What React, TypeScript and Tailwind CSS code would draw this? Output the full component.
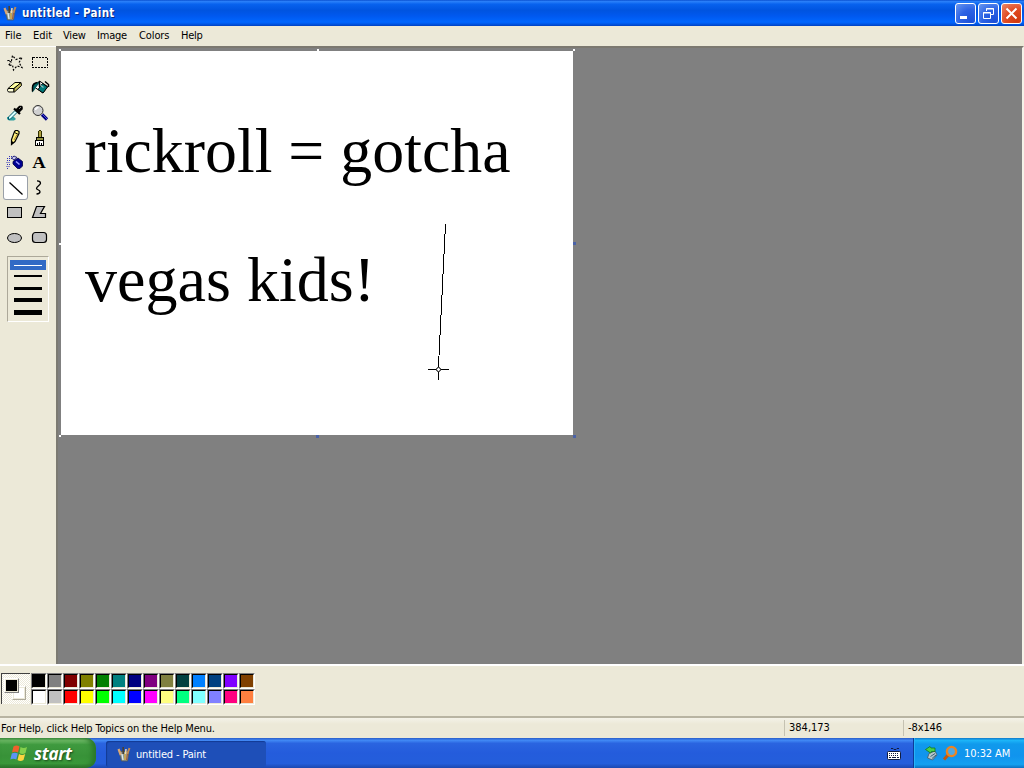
import type { ReactNode } from 'react'

const ui = "font-['DejaVu_Sans_Condensed','DejaVu_Sans',sans-serif]"

// top row / bottom row of the colour box
const PALETTE = [
  ['#000000', '#808080', '#800000', '#808000', '#008000', '#008080', '#000080', '#800080', '#808040', '#004040', '#0080ff', '#004080', '#8000ff', '#804000'],
  ['#ffffff', '#c0c0c0', '#ff0000', '#ffff00', '#00ff00', '#00ffff', '#0000ff', '#ff00ff', '#ffff80', '#00ff80', '#80ffff', '#8080ff', '#ff0080', '#ff8040'],
]

const TOOLS: { name: string; art: ReactNode }[] = [
  {
    name: 'Free-Form Select',
    art: (
      <path
        d="M4.500 10.500h4l1-5 3.500 4 6-2-3 5 3 5-5-1.500-3.500 4-1-5-4 .500 2.500-3.500z"
        fill="none"
        stroke="#000"
        strokeWidth="1.200"
        strokeDasharray="2 1.500"
      />
    ),
  },
  {
    name: 'Select',
    art: <rect x="4.500" y="7.500" width="15" height="10" fill="none" stroke="#000" strokeDasharray="2 1" shapeRendering="crispEdges" />,
  },
  {
    name: 'Eraser',
    art: (
      <g stroke="#000" strokeLinejoin="round">
        <path d="M12 7.500h6l-7 6H5z" fill="#ffffa0" />
        <path d="M5 13.500h6v3.500H5.500l-1-1.500z" fill="#ffffd8" />
        <path d="M18 7.500l.5 3-7 6.500H11v-3.500z" fill="#c8c060" />
      </g>
    ),
  },
  {
    name: 'Fill With Color',
    art: (
      <g>
        <path d="M11.500 6l8 5.500-4.500 6.500-8-5.500z" fill="#fff" stroke="#000" />
        <path d="M14.500 8.500l5 3.500-4.500 6-5-3.500z" fill="#007878" stroke="#000" />
        <path d="M10.500 9l5 3.500" stroke="#90c0c0" strokeWidth="1.500" />
        <path d="M4 17.500v-5l2-4 3-1.500 2.500.500-2 3-2 2.500-1 2z" fill="#006060" />
        <path d="M4.500 16.500v-4c0-3 1.500-4.500 5-5M11.500 12V6" fill="none" stroke="#000" strokeWidth="1.500" />
        <path d="M17 6.500l3.500 3v2.500" fill="none" stroke="#000" strokeWidth="1.500" />
      </g>
    ),
  },
  {
    name: 'Pick Color',
    art: (
      <g>
        <path d="M4 17h7l2 2-2 1.500H6L4 19z" fill="#30a0a0" />
        <path d="M5.500 19.500v-2.500l6.500-6.500 2 2-6.500 6.500z" fill="#d8ffff" stroke="#005868" />
        <path d="M11 8.500l6 5.500" stroke="#000" strokeWidth="2.200" />
        <path d="M13 10l3.500-3.500h2l.5.500v2l-3.500 3.500z" fill="#000" stroke="#000" strokeWidth="1.500" />
        <path d="M16 9l2-2" stroke="#888" />
      </g>
    ),
  },
  {
    name: 'Magnifier',
    art: (
      <g>
        <path d="M14 14.500l5 5" stroke="#000080" strokeWidth="3.200" />
        <path d="M14 14l5 5" stroke="#5050d8" />
        <circle cx="10" cy="10.500" r="5" fill="#d0d0d0" stroke="#303030" />
        <path d="M7.500 10a3 3 0 013-2.500" fill="none" stroke="#fff" strokeWidth="1.500" />
      </g>
    ),
  },
  {
    name: 'Pencil',
    art: (
      <g>
        <path d="M11.500 6.500l1-1h2l1.500 1v2l-4 8-3.500 3v-5z" fill="#fff080" stroke="#000" strokeWidth="1.200" />
        <path d="M11.500 7.500l4 2" stroke="#000" />
        <path d="M11 15l3-5.500" stroke="#b08820" />
        <path d="M8 15.500v4.500l3-2.500z" fill="#000" />
      </g>
    ),
  },
  {
    name: 'Brush',
    art: (
      <g shapeRendering="crispEdges">
        <path d="M10.500 6.500l1-1h1l1 1v6h-3z" fill="#b0a040" stroke="#303000" />
        <path d="M8.500 12.500h7v3h-7z" fill="#909040" stroke="#000" />
        <path d="M7.500 15.500h8v5h-8z" fill="#fff" stroke="#000" />
        <path d="M9.500 18v3M11.500 17v4M13.500 18v3" stroke="#000" />
      </g>
    ),
  },
  {
    name: 'Airbrush',
    art: (
      <g>
        <path d="M6 6.500h5M4 8.500h5M4 10.500h4M3.500 12.500h4M4 14.500h3M3.500 16.500h3M4 18.500h2" stroke="#3030b8" strokeDasharray="1 1" />
        <path d="M10 11.500l5-3.500 4.500 3.500v4.500l-2.500 2.500h-2.500L10 14z" fill="#000090" stroke="#000040" strokeWidth=".800" />
        <path d="M13 11.500l3.500 3" stroke="#a0a0ff" strokeWidth="1.500" />
        <path d="M8.500 8l2.500-2 3 1.500L11 10z" fill="#c8c8f0" stroke="#000060" strokeWidth=".800" />
      </g>
    ),
  },
  {
    name: 'Text',
    art: (
      <text x="4.200" y="18" fontSize="16.500" fontWeight="bold" fontFamily="Liberation Serif, serif" textLength="13.500" lengthAdjust="spacingAndGlyphs">
        A
      </text>
    ),
  },
  { name: 'Line', art: <path d="M6.500 7.500l13 12" stroke="#000" strokeWidth="1.300" /> },
  {
    name: 'Curve',
    art: <path d="M9 5.800q3.500 0 3.500 2.400c0 1.800-4 3.300-4 5.300 0 1.500 3.500 1 3.500 3.200q0 2-3.500 2.300" fill="none" stroke="#000" strokeWidth="1.300" />,
  },
  {
    name: 'Rectangle',
    art: <rect x="4.500" y="7.500" width="14" height="10" fill="#c0c0c0" stroke="#000" shapeRendering="crispEdges" />,
  },
  {
    name: 'Polygon',
    art: <path d="M8.500 6.500h8l-4 7h5v4h-13z" fill="#c0c0c0" stroke="#000" strokeWidth="1.200" />,
  },
  { name: 'Ellipse', art: <ellipse cx="11.500" cy="13" rx="7" ry="4.500" fill="#c0c0c0" stroke="#000" /> },
  {
    name: 'Rounded Rectangle',
    art: <rect x="4.500" y="7.500" width="14" height="10" rx="3" fill="#c0c0c0" stroke="#000" strokeWidth="1.200" />,
  },
]

function PaintIcon() {
  return (
    <svg width="16" height="16" viewBox="0 0 16 16">
      <path d="M3 5.500h10l-1.500 9.500h-6z" fill="#8c9a98" stroke="#5c5848" strokeWidth=".700" />
      <path d="M4.800 9L2.500 3" stroke="#d9a878" strokeWidth="2.200" />
      <path d="M7.200 8V1" stroke="#4a4030" strokeWidth="1.600" />
      <path d="M9.500 8l.5-5" stroke="#f0dcb0" strokeWidth="1.500" />
      <path d="M11.300 8L13.500 2" stroke="#c08850" strokeWidth="2" />
      <path d="M6 8l1 6" stroke="#e0ecec" strokeWidth="1.300" />
      <path d="M9 8v6" stroke="#e8b030" strokeWidth="1.200" />
      <path d="M11.500 8l-1 6" stroke="#b05830" />
    </svg>
  )
}

function CaptionButton({ close, label, children }: { close?: boolean; label: string; children: ReactNode }) {
  return (
    <button
      aria-label={label}
      className={`flex h-[21px] w-[21px] items-center justify-center rounded-[3px] border border-white ${
        close
          ? 'bg-[radial-gradient(circle_at_80%_90%,#d03a10_0%,#e04a22_50%,#ec8a6c_100%)]'
          : 'bg-[radial-gradient(circle_at_80%_90%,#1c50d8_0%,#2c62e4_50%,#6a98f0_100%)]'
      }`}
    >
      <svg width="19" height="19" viewBox="0 0 19 19" fill="none" stroke="#fff">
        {children}
      </svg>
    </button>
  )
}

function TitleBar() {
  return (
    <div className="flex h-[26px] items-center bg-[linear-gradient(180deg,#0a50d0_0%,#2a80fa_6%,#0862ee_16%,#0054e0_40%,#0058ee_60%,#0066ff_85%,#0058e8_92%,#0040c0_100%)] pr-[2px] pl-[2px]">
      <PaintIcon />
      <span className={`ml-1 flex-1 pt-[2px] ${ui} text-[11.5px] font-bold tracking-[0.3px] text-white [text-shadow:1px_1px_#0a2a80]`}>
        untitled - Paint
      </span>
      <div className="flex gap-[2px]">
        <CaptionButton label="Minimize">
          <path d="M4 13.500h7" strokeWidth="3" />
        </CaptionButton>
        <CaptionButton label="Restore">
          <path d="M7.500 7V4.500h7v6H12M7 5h8M4.500 8.500h7v6h-7zM4 9h8" />
        </CaptionButton>
        <CaptionButton close label="Close">
          <path d="M4.500 4.500l10 10M14.500 4.500l-10 10" strokeWidth="2" />
        </CaptionButton>
      </div>
    </div>
  )
}

function MenuBar() {
  return (
    <div className={`flex h-[20px] items-center bg-[#ece9d8] pt-px pl-[5px] ${ui} text-[11px] text-black`}>
      <span className="w-[28px]">File</span>
      <span className="w-[30px]">Edit</span>
      <span className="w-[34px] tracking-[-0.2px]">View</span>
      <span className="w-[42px] tracking-[-0.2px]">Image</span>
      <span className="w-[42px] tracking-[-0.1px]">Colors</span>
      <span className="tracking-[-0.3px]">Help</span>
    </div>
  )
}

function ToolBox() {
  const sizes = ['h-[2px]', 'h-[3px]', 'h-[4px]', 'h-[5px]']
  return (
    <div className="w-[56px] shrink-0 border-t border-white bg-[#ece9d8] pt-[3px] pl-[3px]">
      <div className="grid w-[50px] grid-cols-2">
        {TOOLS.map((t) => (
          <button
            key={t.name}
            aria-label={t.name}
            className={`h-[25px] w-[25px] ${t.name === 'Line' ? 'rounded-[3px] bg-white shadow-[inset_0_0_0_1px_#9aa0a8]' : ''}`}
          >
            <svg width="25" height="25" viewBox="0 0 25 25">
              {t.art}
            </svg>
          </button>
        ))}
      </div>
      <div className="mt-[6px] ml-1 h-[66px] w-[42px] border border-t-[#aca899] border-r-white border-b-white border-l-[#aca899] px-[2px] pt-[3px]">
        <div className="flex h-[10px] items-center justify-center bg-[#316ac5]">
          <div className="h-px w-7 bg-white" />
        </div>
        <div>
          {sizes.map((h) => (
            <div key={h} className="flex h-3 items-center justify-center">
              <div className={`w-7 bg-black ${h}`} />
            </div>
          ))}
        </div>
      </div>
    </div>
  )
}

function Canvas() {
  return (
    <div className="relative flex-1 border-t-2 border-r-2 border-l-2 border-t-[#7c7970] border-r-[#f4f2e8] border-l-[#7c7a72] bg-[#808080] pt-[3px] pl-[3px]">
      <div className="h-[384px] w-[512px] bg-white">
        <svg width="512" height="384" viewBox="0 0 512 384" fontFamily="Liberation Serif, Times New Roman, serif" fontSize="64">
          <text x="23.500" y="120.500" textLength="426" lengthAdjust="spacingAndGlyphs">
            rickroll = gotcha
          </text>
          <text x="24" y="249.500" textLength="290" lengthAdjust="spacingAndGlyphs">
            vegas kids!
          </text>
          <path d="M384.500 173L377.500 315" stroke="#000" shapeRendering="crispEdges" />
          <path d="M367 318.500h8M380 318.500h8M377.500 308v8M377.500 321v8" stroke="#000" shapeRendering="crispEdges" />
          <circle cx="377.500" cy="318.500" r="2" fill="none" stroke="#000" />
        </svg>
      </div>
      {/* resize handles: only the right and bottom ones are live */}
      <i className="absolute top-px left-px size-[2px] bg-white" />
      <i className="absolute top-px left-[259px] size-[2px] bg-white" />
      <i className="absolute top-px left-[515px] size-[2px] bg-white" />
      <i className="absolute top-[195px] left-px size-[2px] bg-white" />
      <i className="absolute top-[387px] left-px size-[2px] bg-white" />
      <i className="absolute top-[194px] left-[515px] size-[3px] bg-[#4a62a8]" />
      <i className="absolute top-[387px] left-[258px] size-[3px] bg-[#4a62a8]" />
      <i className="absolute top-[387px] left-[515px] size-[3px] bg-[#4a62a8]" />
    </div>
  )
}

function ColorBox() {
  return (
    <div className="flex h-[52px] border-t-2 border-t-white bg-[#ece9d8] pt-[7px] pl-px">
      <div className="mr-px h-[31px] w-[29px] border-t border-l border-[#404040] bg-[#f5f4ee] bg-[repeating-conic-gradient(#fff_0_25%,#ece9d8_0_50%)] bg-[length:2px_2px]">
        <div className="relative h-full w-full">
          <div className="absolute top-[12px] left-[10px] h-[14px] w-[14px] border border-t-white border-r-[#aca899] border-b-[#aca899] border-l-white bg-white shadow-[inset_0_0_0_1px_#ece9d8]" />
          <div className="absolute top-[4px] left-[2px] h-[15px] w-[15px] border border-t-white border-r-[#808080] border-b-[#808080] border-l-white bg-[#ece9d8] p-px">
            <div className="h-[11px] w-[11px] bg-black" />
          </div>
        </div>
      </div>
      <div>
        {PALETTE.map((row, i) => (
          <div key={i} className="flex">
            {row.map((c) => (
              <div key={c} className="h-4 w-4 border border-t-[#808080] border-r-white border-b-white border-l-[#808080]">
                <div
                  className="h-full w-full border border-t-black border-r-[#ece9d8] border-b-[#ece9d8] border-l-black"
                  style={{ backgroundColor: c }}
                />
              </div>
            ))}
          </div>
        ))}
      </div>
    </div>
  )
}

function StatusBar() {
  return (
    <div
      className={`flex h-[22px] items-center border-t-2 border-t-[#b8b4a2] bg-[linear-gradient(180deg,#f4f2e8_0%,#ece9d8_30%)] ${ui} pl-px text-[11px] leading-none text-black`}
    >
      <span className="w-[783px] tracking-[-0.19px]">For Help, click Help Topics on the Help Menu.</span>
      <span className="h-[16px] w-[119px] border-l border-[#c5c2b2] pt-[2px] pl-[4px]">384,173</span>
      <span className="h-[16px] border-l border-[#c5c2b2] pt-[2px] pl-[4px] tracking-[-0.1px]">-8x146</span>
    </div>
  )
}

function Taskbar() {
  return (
    <div className="flex h-[30px] bg-[linear-gradient(180deg,#2a5cc8_0%,#4088f4_8%,#2a64e0_18%,#245cdc_50%,#245edb_85%,#1c48b0_100%)]">
      <button className="flex w-[96px] items-center rounded-r-[10px] bg-[linear-gradient(180deg,#4c9a4c_0%,#70bc68_8%,#3f9a3f_22%,#389238_60%,#3a983a_85%,#2a702a_100%)] pl-[10px] shadow-[inset_-4px_0_5px_#2a782a]">
        <svg width="19" height="18" viewBox="0 0 19 18">
          <path d="M3.500 2.500q3-2 6 0L8 8.500q-3-1.500-6 0z" fill="#f0602c" />
          <path d="M10.500 3q3 2 6.500 0l-1.500 6q-3 2-6 0z" fill="#84d04c" />
          <path d="M1.800 9.500q3-1.500 6 0l-1.500 6q-3-1.500-6 0z" fill="#5c94f4" />
          <path d="M9 10q3 2 6.200 0l-1.700 6q-3 2-6 0z" fill="#fcd440" />
        </svg>
        <span className="ml-[5px] font-['Open_Sans','DejaVu_Sans',sans-serif] text-[17px] leading-none font-bold tracking-[-0.3px] text-white italic [text-shadow:1px_1px_2px_#1a4a1a]">
          start
        </span>
      </button>
      <div className="flex-1 pt-[3px] pl-[10px]">
        <div className={`flex h-[26px] w-[160px] items-center rounded-[3px] bg-[#1e4fb8] pl-[10px] shadow-[inset_1px_1px_1px_#123a94] ${ui} text-[11px] text-white`}>
          <PaintIcon />
          <span className="ml-[4px] pt-[2px] tracking-[-0.15px]">untitled - Paint</span>
        </div>
      </div>
      <svg className="mt-[9px] mr-[12px]" width="14" height="14" viewBox="0 0 14 14">
        <path d="M4 1.500h2l1 1h2l1-1h2" fill="none" stroke="#101c40" />
        <rect x=".500" y="4.500" width="13" height="8" rx="1" fill="#fff" stroke="#101c40" />
        <path d="M2 6.500h10M2 8.500h10" stroke="#101c40" strokeDasharray="1 1" />
        <path d="M2 10.500h10" stroke="#101c40" strokeDasharray="2 1 4 1" />
      </svg>
      <div className="flex w-[111px] items-center border-l border-[#0c3c98] bg-[linear-gradient(180deg,#1078c8_0%,#1cb4f8_8%,#109aec_20%,#1094ee_60%,#14a0f0_88%,#0c70c0_100%)] pl-[9px] shadow-[inset_1px_0_#28b4f8]">
        <svg width="17" height="16" viewBox="0 0 17 16">
          <path d="M6 8.500l6-2.500 2 4-4.500 5-5-2z" fill="#b8c8c8" stroke="#405868" strokeWidth=".800" />
          <path d="M7.500 11.500l4.500-3M9 13.500l4-3.500" stroke="#386080" />
          <path d="M2.500 4.500L7 1.500l1 1.500h4v3.500H8.500L7.500 8z" fill="#48d048" stroke="#107010" strokeWidth=".700" />
        </svg>
        <svg className="ml-[2px]" width="17" height="16" viewBox="0 0 17 16">
          <path d="M6.500 9.500L2 14.500" stroke="#c05810" strokeWidth="3" />
          <circle cx="9.500" cy="6.500" r="4.600" fill="#50a8e0" stroke="#ec8420" strokeWidth="2.400" />
        </svg>
        <span className={`ml-[5px] pt-[2px] ${ui} text-[11px] tracking-[-0.1px] whitespace-nowrap text-white`}>10:32 AM</span>
      </div>
    </div>
  )
}

export default function App() {
  return (
    <div className="flex h-[768px] w-[1024px] flex-col overflow-hidden bg-[#ece9d8]">
      <TitleBar />
      <MenuBar />
      <div className="flex h-[618px]">
        <ToolBox />
        <Canvas />
      </div>
      <ColorBox />
      <StatusBar />
      <Taskbar />
    </div>
  )
}
